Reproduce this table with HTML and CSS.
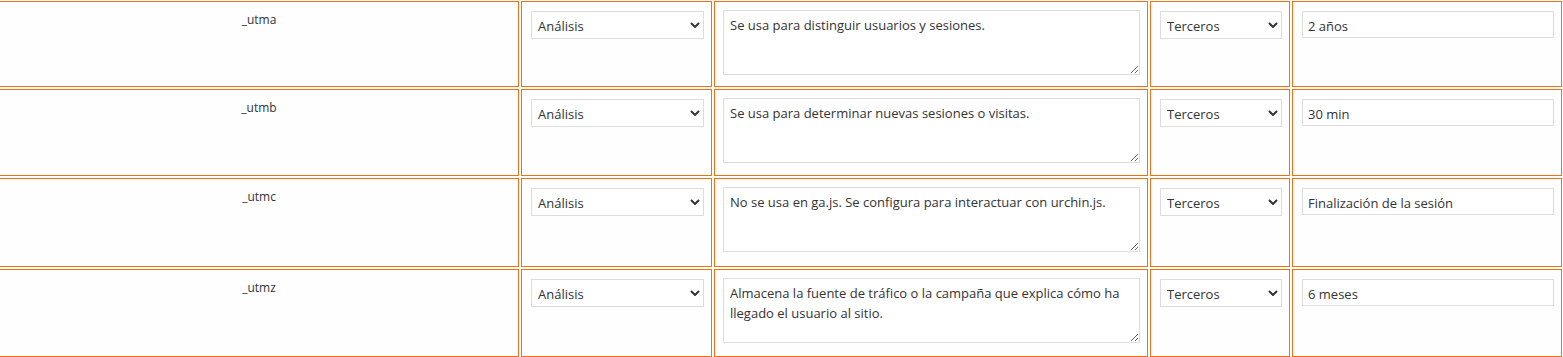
FILE: index.html
```html
<!DOCTYPE html>
<html lang="es">
<head>
<meta charset="utf-8">
<title>Cookies</title>
<link rel="stylesheet" href="styles.css">
</head>
<body>
<div class="cookies">
  <div class="cell name">_utma</div>
  <div class="cell ctrl"><div class="select-wrap"><select class="select"><option>Análisis</option></select><svg class="chev" width="10" height="6" viewBox="0 0 10 6"><polyline points="1,1 5,5 9,1" fill="none" stroke="#333" stroke-width="2"/></svg></div></div>
  <div class="cell desc"><textarea class="area">Se usa para distinguir usuarios y sesiones.</textarea></div>
  <div class="cell ctrl"><div class="select-wrap"><select class="select"><option>Terceros</option></select><svg class="chev" width="10" height="6" viewBox="0 0 10 6"><polyline points="1,1 5,5 9,1" fill="none" stroke="#333" stroke-width="2"/></svg></div></div>
  <div class="cell ctrl"><input class="field" type="text" value="2 años"></div>

  <div class="cell name">_utmb</div>
  <div class="cell ctrl"><div class="select-wrap"><select class="select"><option>Análisis</option></select><svg class="chev" width="10" height="6" viewBox="0 0 10 6"><polyline points="1,1 5,5 9,1" fill="none" stroke="#333" stroke-width="2"/></svg></div></div>
  <div class="cell desc"><textarea class="area">Se usa para determinar nuevas sesiones o visitas.</textarea></div>
  <div class="cell ctrl"><div class="select-wrap"><select class="select"><option>Terceros</option></select><svg class="chev" width="10" height="6" viewBox="0 0 10 6"><polyline points="1,1 5,5 9,1" fill="none" stroke="#333" stroke-width="2"/></svg></div></div>
  <div class="cell ctrl"><input class="field" type="text" value="30 min"></div>

  <div class="cell name">_utmc</div>
  <div class="cell ctrl"><div class="select-wrap"><select class="select"><option>Análisis</option></select><svg class="chev" width="10" height="6" viewBox="0 0 10 6"><polyline points="1,1 5,5 9,1" fill="none" stroke="#333" stroke-width="2"/></svg></div></div>
  <div class="cell desc"><textarea class="area">No se usa en ga.js. Se configura para interactuar con urchin.js.</textarea></div>
  <div class="cell ctrl"><div class="select-wrap"><select class="select"><option>Terceros</option></select><svg class="chev" width="10" height="6" viewBox="0 0 10 6"><polyline points="1,1 5,5 9,1" fill="none" stroke="#333" stroke-width="2"/></svg></div></div>
  <div class="cell ctrl"><input class="field" type="text" value="Finalización de la sesión"></div>

  <div class="cell name">_utmz</div>
  <div class="cell ctrl"><div class="select-wrap"><select class="select"><option>Análisis</option></select><svg class="chev" width="10" height="6" viewBox="0 0 10 6"><polyline points="1,1 5,5 9,1" fill="none" stroke="#333" stroke-width="2"/></svg></div></div>
  <div class="cell desc"><textarea class="area">Almacena la fuente de tráfico o la campaña que explica cómo ha llegado el usuario al sitio.</textarea></div>
  <div class="cell ctrl"><div class="select-wrap"><select class="select"><option>Terceros</option></select><svg class="chev" width="10" height="6" viewBox="0 0 10 6"><polyline points="1,1 5,5 9,1" fill="none" stroke="#333" stroke-width="2"/></svg></div></div>
  <div class="cell ctrl"><input class="field" type="text" value="6 meses"></div>
</div>
</body>
</html>
```
FILE: styles.css
```css
html, body {
  margin: 0;
  padding: 0;
  background: #ffffff;
}

body {
  font-family: "Open Sans", "Noto Sans", "Liberation Sans", sans-serif;
  color: #333333;
  overflow: hidden;
}

.cookies {
  display: grid;
  grid-template-columns: 520px 191px 434px 140px 270px;
  grid-template-rows: 86px 87px 89px 88px;
  gap: 2px;
  margin: 1px 0 0 -1px;
}

.cell {
  box-sizing: border-box;
  border: 1px solid #f2700f;
  background: #fefefe;
  min-width: 0;
}

.name {
  padding: 9px 8px 8px;
  text-align: center;
  font-size: 12px;
  line-height: 17px;
  color: #333333;
}

.ctrl {
  padding: 9px 7px 0 9px;
}

.desc {
  padding: 8px 7px 0 8px;
}

.select-wrap {
  position: relative;
}

.select {
  -webkit-appearance: none;
  appearance: none;
  display: block;
  box-sizing: border-box;
  width: 100%;
  height: 28px;
  margin: 0;
  padding: 2px 20px 0 6px;
  border: 1px solid #dddddd;
  border-radius: 0;
  background: #ffffff;
  font-family: inherit;
  font-size: 13px;
  color: #333333;
  outline: none;
}

.chev {
  position: absolute;
  right: 4px;
  top: 11px;
  pointer-events: none;
}

.field {
  display: block;
  box-sizing: border-box;
  width: 100%;
  height: 27px;
  margin: 0;
  padding: 2px 5px 0;
  border: 1px solid #dddddd;
  border-radius: 0;
  background: #ffffff;
  font-family: inherit;
  font-size: 13px;
  color: #333333;
  outline: none;
}

.area {
  display: block;
  box-sizing: border-box;
  width: 100%;
  height: 65px;
  margin: 0;
  padding: 4px 6px 3px;
  border: 1px solid #dddddd;
  border-radius: 0;
  background: #ffffff;
  font-family: inherit;
  font-size: 13px;
  line-height: 20px;
  color: #333333;
  outline: none;
}
```
